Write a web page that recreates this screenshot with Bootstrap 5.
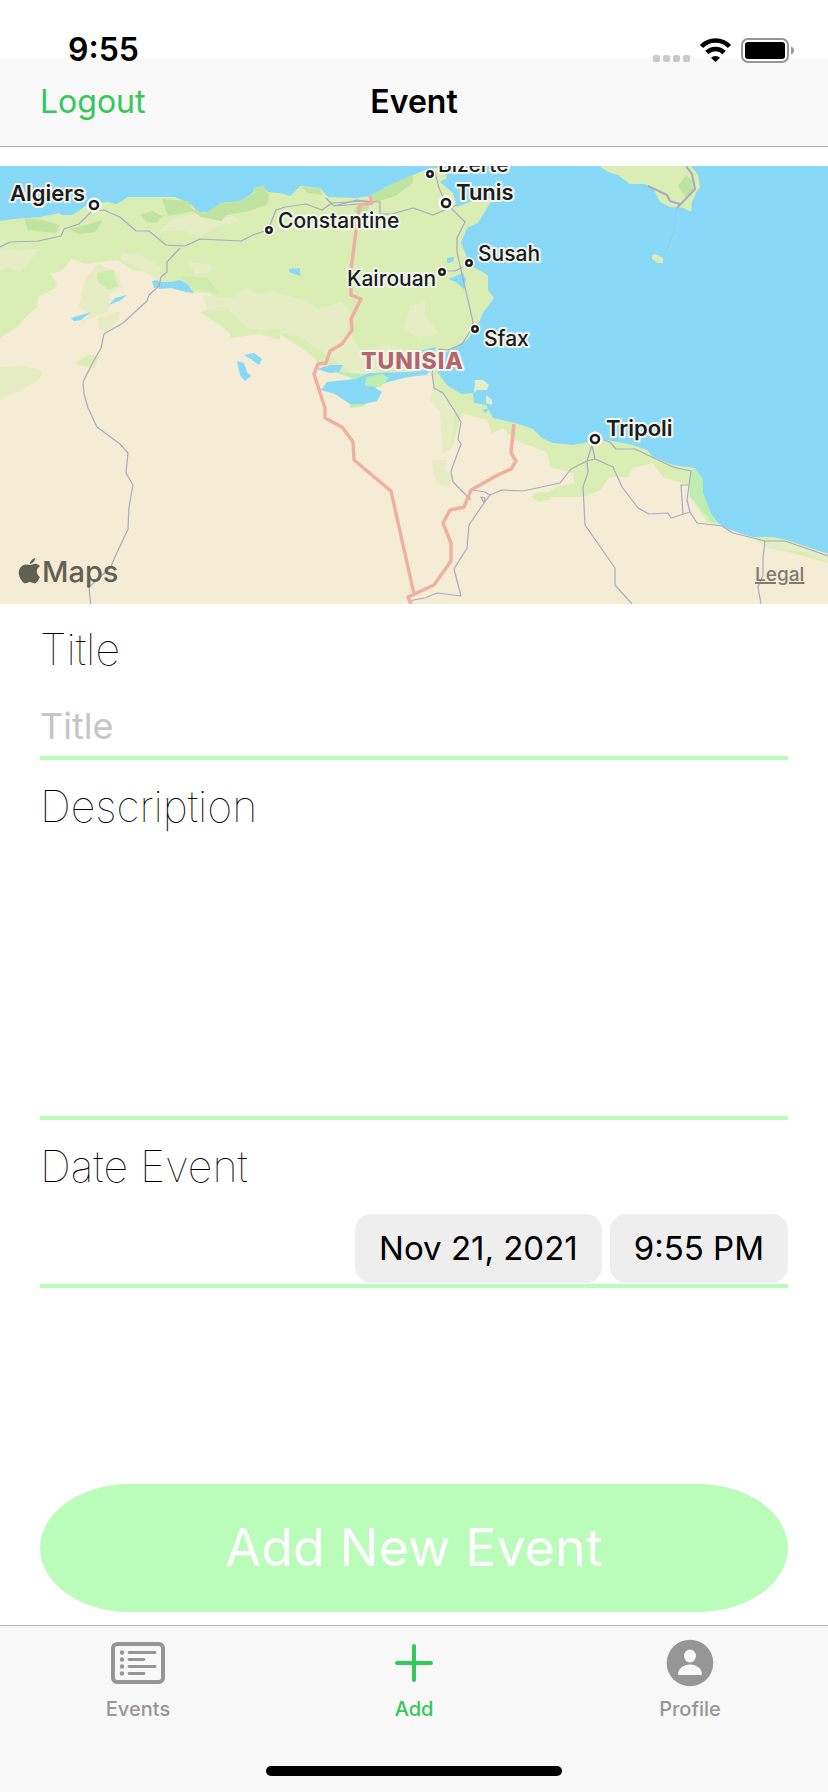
<!DOCTYPE html>
<html lang="en">
<head>
<meta charset="utf-8">
<meta name="viewport" content="width=device-width, initial-scale=1">
<title>Event</title>
<link href="https://cdn.jsdelivr.net/npm/bootstrap@5.3.0/dist/css/bootstrap.min.css" rel="stylesheet">
<style>
  body { font-family: Inter, "Liberation Sans", sans-serif; color: #000; background: #fff; }
  svg { display: block; }
  .top-area { background: linear-gradient(#fff 58px, #f8f8f8 58px); border-bottom: 1px solid #b2b2b2; padding: 30px 0 12px; margin-bottom: 19px; }
  .status-row { height: 40px; padding: 0 34px 0 68px; font-size: 32px; font-weight: 600; line-height: 40px; }
  .title-row { height: 64px; padding: 0 40px; font-size: 32px; line-height: 40px; }
  .title-row h1 { font-size: 32px; line-height: 40px; font-weight: 600; }
  .title-row a { color: #34c759; }
  .map-area svg { width: 100%; height: auto; }
  .map-area text { font-size: 21px; font-weight: 500; fill: #1c1c1e; stroke: #f2f6ee; stroke-width: 4px; stroke-linejoin: round; paint-order: stroke; }
  .map-area .capital { font-size: 22px; font-weight: 600; }
  .map-area .country { font-size: 23px; font-weight: 800; fill: #b5656a; letter-spacing: 1px; }
  .map-area .brand { font-size: 29px; fill: #625f53; stroke: none; }
  .map-area .legal { font-size: 19px; fill: #7f7b6e; stroke: none; text-decoration: underline; }
  .form-area { padding: 15px 40px 0; }
  .field-name { font-size: 43px; line-height: 60px; font-weight: 100; }
  .line-field { border: 0; border-bottom: 4px solid #bafcb9; border-radius: 0; padding: 0; font-size: 36px; background: transparent; resize: none; }
  .line-field:focus { box-shadow: none; border-color: #bafcb9; background: transparent; }
  .line-field::placeholder { color: #c5c5c7; opacity: 1; }
  .title-input { height: 81px; padding: 24px 0 8px; line-height: 44px; }
  .desc-input { height: 284px; }
  .date-row { border-bottom: 4px solid #bafcb9; padding: 18px 0 1px; }
  .pill { height: 69px; border: 0; border-radius: 16px; background: #eee; color: #000; font-size: 33px; padding: 0 24px; }
  .add-btn { height: 128px; border: 0; border-radius: 90px / 64px; background: #bafcb9; color: #fff; font-size: 52px; line-height: 64px; }
  .tab-area { background: #f8f8f8; border-top: 1px solid #b2b2b2; margin-top: 13px; padding: 13px 0 16px; }
  .tab-area a { color: #969696; font-size: 20px; line-height: 28px; font-weight: 500; }
  .tab-area a.active { color: #34c759; }
  .tab-area a svg { height: 48px; margin-bottom: 8px; }
  .home-bar { width: 296px; height: 10px; border-radius: 5px; background: #000; margin-top: 43px; }
</style>
</head>
<body>
<div class="d-flex flex-column min-vh-100">
  <header class="top-area">
    <div class="status-row d-flex justify-content-between align-items-center">
      <span>9:55</span>
      <svg width="141" height="25" viewBox="0 0 141 25" aria-hidden="true">
        <g fill="#c9c9ca"><rect y="17" width="7" height="7" rx="2"/><rect x="10" y="17" width="7" height="7" rx="2"/><rect x="20" y="17" width="7" height="7" rx="2"/><rect x="30" y="17" width="7" height="7" rx="2"/></g>
        <g fill="none" stroke="#000" stroke-width="4.6"><path d="M48.500 8.500a19.500 19.500 0 0 1 28 0"/><path d="M53.800 14.500a12.400 12.400 0 0 1 17.400 0"/></g>
        <path d="M62.500 24l-4.500-4.300a6.500 6.500 0 0 1 9 0z"/>
        <rect x="89" y="1" width="46" height="23" rx="6" fill="#fff" stroke="#969696" stroke-width="2"/>
        <rect x="92" y="4" width="40" height="17" rx="3"/>
        <path d="M138 8.500q3 1.200 3 4t-3 4z" fill="#969696"/>
      </svg>
    </div>
    <nav class="title-row row g-0 align-items-center">
      <div class="col"><a href="#" class="text-decoration-none">Logout</a></div>
      <h1 class="col-auto m-0">Event</h1>
      <div class="col"></div>
    </nav>
  </header>

  <section class="map-area" aria-label="Map">
    <svg viewBox="0 166 828 438" role="img" aria-label="Map of Tunisia">
      <rect y="166" width="828" height="438" fill="#88d9f7"/>
      <!-- mainland -->
      <path fill="#d9edb5" d="M0 221L14 219 40 217 59 213 62 215 72 215 80 210 89 203 100 203 107 202 117 204 128 197 147 197 175 197 186 202 192 205 197 211 205 213 217 210 220 203 240 201 252 194 255 188 263 186 268 192 280 193 290 196 300 186 320 188 328 197 357 198 370 196 390 185 413 175 430 168 443 168 447 178 440 182 453 193 457 207 467 203 483 197 492 200 478 223 467 228 461 243 467 257 473 267 488 275 488 290 494 298 483 313 477 327 467 340 450 350 438 357 438 373 448 386 462 394 473 393 474 403 486 405 493 418 515 423 533 429 542 438 553 443 573 445 590 442 607 440 633 445 647 450 653 457 673 465 695 468 703 480 703 493 710 512 718 523 733 532 753 537 773 537 787 540 828 554V604H0z"/>
      <!-- desert -->
      <path fill="#f4ecd4" d="M0 338L17 327 28 315 37 307 38 297 55 288 57 283 49 273 60 272 72 259 85 264 117 260 133 270 153 273 160 285 187 292 210 293 218 305 200 313 211 319 230 333 247 334 280 334 300 347 313 357 327 373 360 370 390 374 433 371 433 385 430 400 440 410 443 453 452 447 462 413 487 420 492 433 503 428 515 440 547 452 550 467 573 473 575 483 556 487 540 497 583 497 600 490 610 477 628 477 633 468 653 463 663 477 688 485 690 497 707 522 720 526 753 538 767 547 793 553 828 563V604H0z"/>
      <!-- dry grassland -->
      <g fill="#e6ecc4">
        <path d="M0 248l18 2 22-1-10 12-10 12-12-6-8 4zM122 252l20 4 18 10 2 16-40-22zM98 264l20 8 4 15-12 7-2 17-22 9-7 8 10-14-10-8 6-27zM158 232l18-15 28-5 28 3 8 6-24 6-16 10-18-7zM188 262l25 3-4 8-14 1zM202 295l30 3 14-10 12 6 15-3 24 7 14 5 8 6 22-7 10 9-4 18 16 25 24-10 35 12-40 15-30 1-53-36-52-8-18-18-20 2z"/>
        <path d="M0 367l25-1 17 5-2 8-20 12-12 4-8 4zM98 318l22-7-2 10-12 11-8-4zM410 307l15-7 0 14 14 20-20 4-15-9zM433 384l-3 16 10 10 3 43 9-6 3-39zM432 460l15 0-2 10 8 5-3 12-13-3-3-10zM767 547l40 6 21 10v-9l-38-12-28-1z"/>
      </g>
      <path fill="#d9edb5" d="M75 363l13-8 10 1-3 12-12-2zM230 322l22 10 28-4v12l-20-6-30 4z"/>
      <path fill="#d9edb5" d="M531 497l8-5 11 0v7l-11 3z"/>
      <!-- forest -->
      <path fill="#c1e3a1" d="M24 218l18 2 18 5-4 8-28-3zM68 229l14-3 21-6-8 12-16 2zM140 215l12-4 11 5-6 7-10-1zM162 199l26 2 6 10-14 3-12 2zM190 209l15 4 16-10 20-2 13-7 1-6 8-2 6 9-2 10-18 6-22 4-6 6-20-4zM301 187l19 1 2 7-14-2zM370 196l20-11 23-10 0 8-18 13-22 7-3-3zM356 206l14-3-3 11-13-2z"/>
      <path fill="#cdebaf" d="M97 273l16-3 5 16-9 4-11-8zM180 276l27 2 12 15-32-7z"/>
      <path fill="#bbeeb0" d="M695 468l8 12 0 13 7 19 8 13-7-4-21-25 1-26zM328 370l24 8-2 30 14-2 14-15-12-18 29 0-5 8-24-7z"/>
      <!-- lakes -->
      <g fill="#88d9f7">
        <path d="M327 382l28-3 15-6 40-1 24-4-8 7-18 2-16 4-12 3-5 4 7 4-5 9-13 3-14 0-15-10-14-4zM317 369l14-4 12 0-4 7-9 1zM422 350l14-3-2 5-12 1zM447 258l7-1-1 5-6 1zM448 279l15-6 3 6-2 10-8-7zM289 269l11-1v8l-11-4zM152 281l6-1 2 6-6 2zM158 282l14 0 8-2 8 5 6 8-8-1-15-4-12 1zM109 305l6-7 12-3-6 5zM71 318l20-6-10 8-7 1zM244 355l10-2 8 6-3 6-7-5zM237 361l7 2 3 9 4 4-6 5-5-6zM482 410l7-2-3 5z"/>
      </g>
      <path fill="#bbeeb0" d="M366 377l16-3 7 4-9 9-15-1z"/>
      <path fill="#e3edca" d="M475 380l8 0 6 5-2 5-10 0-3 3zM486 395l6 5 0 5-6-2z"/>
      <!-- Sicily and the small island -->
      <path fill="#d9edb5" d="M599 166l9 6 10 3 12 9 15 0 8 4 7 14 10 5 14 1 7 4 1-10 5-11 3-4-2-12-7-9v-5z"/>
      <path fill="#c1e3a1" d="M678 186l8-11 6 5 1 10-7 8z"/>
      <path fill="#dceabf" d="M652 255l3-1 8 4 0 5-5 0-6-4z"/>
      <!-- roads -->
      <g fill="none" stroke="#a9abc0" stroke-width="1.200" stroke-linejoin="round">
        <path d="M0 247l10-5 28-1 23-5 3-7 15-5 13-13 13-1 3 2 12 5 16 14 13 0 17 14 19 1 15-7 41 2 12-6 15-5 8-20 9-3 21-3 16 6 10-7 33-2 15 1v12l12 0 21-6 20 7 24-10"/>
        <path d="M180 248l-13 14v10l-6 5-2 9-10 9-2 6-24 22-19 11-3 14-8 14-10 20 1 12 4 14 9 19 23 17 8 9-2 20 7 12-4 22-1 22-14 30-3 8-22 20 3 31"/>
        <path d="M326 198l8 8 23-6 14 2M334 206l38-3M435 172l4 16 7 15 8 8 11 11-8 16v14l7 31 9 39-2 8-9 14-14 6-9-1-7 24 2 15 9 5 11 17 7 12-3 17 3 5-10 27 2 11 18 18M441 271h14l8-4"/>
        <path d="M472 490L485 492 490 495 502 490 523 491 560 483 571 469 587 461 595 459 613 467 622 487 638 508 649 514 668 513 671 518 690 512"/>
        <path d="M592 445L587 461 588 472 583 487 585 525 615 568 615 585 632 604M592 445L595 459"/>
        <path d="M604 440L610 442 616 449 635 449 673 467 691 471 687 500 690 512 697 523 722 526 733 533 765 541 785 541 828 556M688 485L681 485 683 514"/>
        <path d="M490 495L484 503 469 525 467 548 454 569 461 596 437 593 425 598 413 600 410 604M481 497L485 498 484 503z"/>
        <path d="M765 541L763 557 763 575 758 587 761 604"/>
        <path stroke-width="2" d="M648 186l19 9 3 6 10 3M686 166l6 8 3 15-18 19"/>
      </g>
      <path d="M676 208l-2 25-10 22" fill="none" stroke="#97cbe0"/>
      <!-- borders -->
      <g fill="none" stroke="#efafa3" stroke-width="3.400" stroke-linejoin="round">
        <path d="M370 196l2 7-12 2-3 18-6 47 0 25 10 4-10 20 1 11-10 14-12 7-4 12-8 1-4 10 11 34v10l17 9 11 15 1 18 37 31 23 103M514 424l-3 29 5 8-5 8-15 7-25 14-7 17-14 3-7 13 8 20v18l-17 24-26 12 3 7"/>
      </g>
      <!-- cities -->
      <g fill="#fff" stroke="#fff" stroke-width="7"><circle cx="94" cy="205" r="4"/><circle cx="446" cy="203" r="4"/><circle cx="595" cy="439" r="4"/><circle cx="269" cy="230" r="2"/><circle cx="430" cy="174" r="2"/><circle cx="469" cy="263" r="2"/><circle cx="442" cy="272" r="2"/><circle cx="475" cy="329" r="2"/></g>
      <g fill="#fff" stroke="#1c1c1e" stroke-width="2.600"><circle cx="94" cy="205" r="4"/><circle cx="446" cy="203" r="4"/><circle cx="595" cy="439" r="4"/><circle cx="269" cy="230" r="2.700"/><circle cx="430" cy="174" r="2.700"/><circle cx="469" cy="263" r="2.700"/><circle cx="442" cy="272" r="2.700"/><circle cx="475" cy="329" r="2.700"/></g>
      <text class="capital" x="10" y="201">Algiers</text>
      <text x="278" y="228">Constantine</text>
      <text x="438" y="172">Bizerte</text>
      <text class="capital" x="456" y="200">Tunis</text>
      <text x="478" y="261">Susah</text>
      <text x="347" y="286">Kairouan</text>
      <text x="484" y="346">Sfax</text>
      <text class="capital" x="606" y="436">Tripoli</text>
      <text class="country" x="361" y="369">TUNISIA</text>
      <path fill="#625f53" d="M35 559q-1 4-5 5-1-1 1-3 1-2 4-3zM30 565c2 0 4-2 7-1q2 1 3 2-4 3-3 7 1 3 3 4-2 4-4 6c-2 1-4-1-6-1s-4 2-6 1c-4-3-7-10-4-15 3-4 6-4 10-3z"/>
      <text class="brand" x="42" y="582">Maps</text>
      <a href="#"><text class="legal" x="755" y="581">Legal</text></a>
    </svg>
  </section>

  <form class="form-area flex-grow-1 d-flex flex-column">
    <label class="field-name" for="event-title">Title</label>
    <input id="event-title" type="text" class="form-control line-field title-input" placeholder="Title">
    <label class="field-name mt-3" for="event-desc">Description</label>
    <textarea id="event-desc" class="form-control line-field desc-input"></textarea>
    <label class="field-name mt-3" for="event-date">Date Event</label>
    <div class="date-row d-flex justify-content-end gap-2">
      <button id="event-date" type="button" class="pill">Nov 21, 2021</button>
      <button type="button" class="pill">9:55 PM</button>
    </div>
    <button type="submit" class="add-btn w-100 mt-auto">Add New Event</button>
  </form>

  <footer class="tab-area">
    <nav class="row g-0 text-center">
      <a href="#" class="col text-decoration-none d-flex flex-column align-items-center">
        <svg width="54" viewBox="0 0 54 48" fill="none" stroke="currentColor" stroke-linecap="round" aria-hidden="true"><rect x="2" y="5" width="50" height="38" rx="4" stroke-width="4"/><path stroke-width="2.800" d="M18 13.500h26M18 20.500h15M18 27.500h26M18 34.500h15"/><path stroke-width="4.400" d="M11 13.500h0M11 20.500h0M11 27.500h0M11 34.500h0"/></svg>
        <span>Events</span>
      </a>
      <a href="#" class="active col text-decoration-none d-flex flex-column align-items-center" aria-current="page">
        <svg width="48" viewBox="0 0 48 48" fill="none" stroke="currentColor" stroke-width="4" stroke-linecap="round" aria-hidden="true"><path d="M24 7v34M7 24h34"/></svg>
        <span>Add</span>
      </a>
      <a href="#" class="col text-decoration-none d-flex flex-column align-items-center">
        <svg width="48" viewBox="0 0 48 48" aria-hidden="true"><circle cx="24" cy="24" r="23.300" fill="currentColor"/><ellipse cx="24" cy="17" rx="6" ry="6.500" fill="#f8f8f8"/><path fill="#f8f8f8" d="M12 35c0-5 5-9.500 12-9.500s12 4.500 12 9.500q0 1-1 1H13q-1 0-1-1z"/></svg>
        <span>Profile</span>
      </a>
    </nav>
    <div class="home-bar mx-auto"></div>
  </footer>
</div>
<script src="https://cdn.jsdelivr.net/npm/bootstrap@5.3.0/dist/js/bootstrap.bundle.min.js"></script>
</body>
</html>
